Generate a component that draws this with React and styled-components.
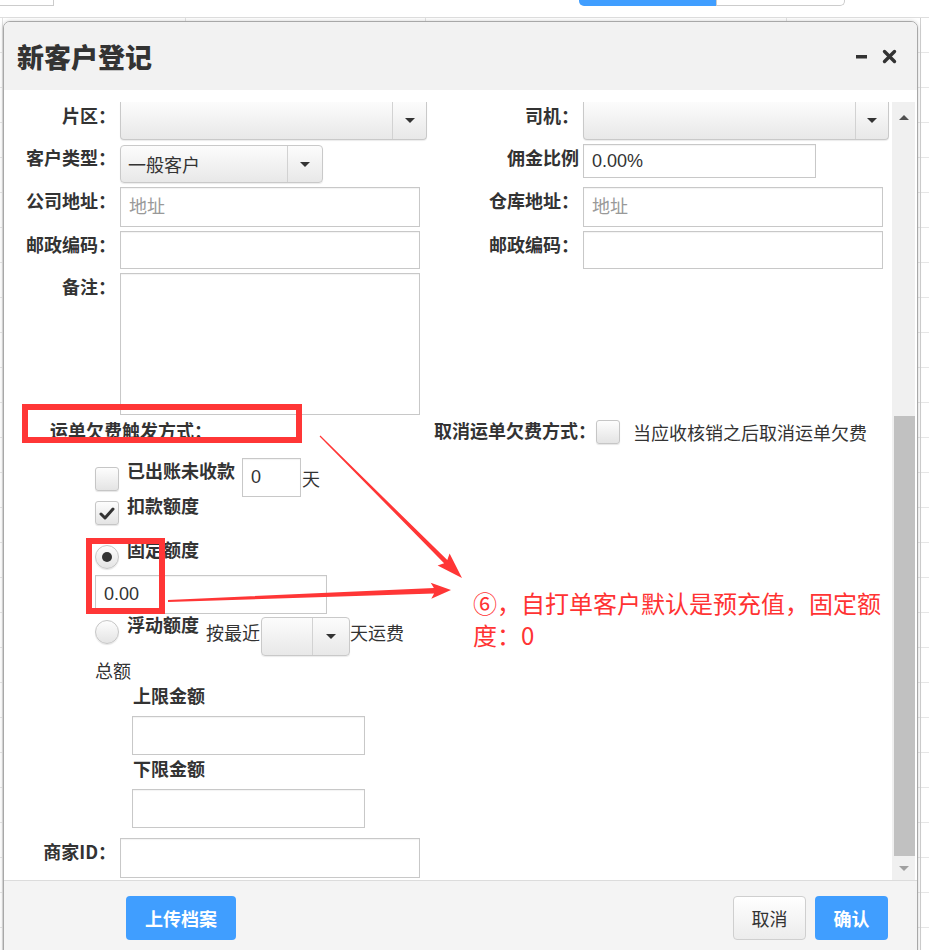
import React from 'react';
import styled, { createGlobalStyle } from 'styled-components';

const GlobalStyle = createGlobalStyle`
  html, body {
    margin: 0;
    padding: 0;
  }
  body {
    font-family: "Liberation Sans", "Noto Sans CJK SC", sans-serif;
    color: #333;
    background: #fff;
  }
  * {
    box-sizing: border-box;
  }
`;

const Page = styled.div`
  position: relative;
  width: 929px;
  height: 950px;
  overflow: hidden;
  background: #fff;
`;

// list page that sits behind the modal
const TopStrip = styled.div`
  height: 18px;
  display: flex;
  align-items: flex-start;
  border-bottom: 1px solid #dedede;
`;

const SearchStub = styled.div`
  width: 54px;
  height: 6px;
  border: 1px solid #ccc;
  border-top: none;
  border-left: none;
`;

const Tabs = styled.div`
  display: flex;
  margin-left: 525px;
`;

const Tab = styled.div`
  width: ${p => p.$w}px;
  height: 6px;
  background: ${p => (p.$active ? '#409eff' : '#fff')};
  border: ${p => (p.$active ? 'none' : '1px solid #ccc')};
  border-top: none;
  border-radius: ${p => (p.$active ? '0 0 0 5px' : '0 0 5px 0')};
`;

const TableBg = styled.div`
  height: 932px;
  background:
    linear-gradient(#e2e2e2, #e2e2e2) 2px 0 / 1px 100% no-repeat,
    linear-gradient(#e2e2e2, #e2e2e2) 185px 0 / 1px 100% no-repeat,
    linear-gradient(#e2e2e2, #e2e2e2) 425px 0 / 1px 100% no-repeat,
    linear-gradient(#e2e2e2, #e2e2e2) 786px 0 / 1px 100% no-repeat,
    linear-gradient(#d0d0d0, #d0d0d0) 920px 0 / 1px 100% no-repeat,
    repeating-linear-gradient(to bottom, transparent 0 34px, #e6e6e6 34px 35px);
`;

const Dialog = styled.div`
  position: absolute;
  left: 3px;
  top: 21px;
  width: 915px;
  height: 950px;
  display: flex;
  flex-direction: column;
  background: #fff;
  border: 1px solid #a8a8a8;
  border-radius: 7px 7px 0 0;
  box-shadow: 0 0 4px rgba(0, 0, 0, 0.18);
  overflow: hidden;
`;

const Header = styled.div`
  flex: none;
  height: 68px;
  display: flex;
  align-items: center;
  justify-content: space-between;
  padding: 0 20px 0 13px;
  background: #f2f2f2;
`;

const Title = styled.h2`
  margin: 0;
  font-family: "Noto Sans CJK SC", sans-serif;
  font-size: 27px;
  font-weight: 900;
  color: #333;
`;

const HeaderTools = styled.div`
  display: flex;
  align-items: center;
  gap: 14px;
  color: #333;
`;

const Body = styled.div`
  flex: none;
  height: 790px;
  padding-top: 12px;
  display: flex;
  flex-direction: column;
  background: #fff;
`;

const ScrollArea = styled.div`
  flex: 1;
  min-height: 0;
  display: flex;
  padding-right: 2px;
`;

const Content = styled.div`
  flex: 1;
  overflow: hidden;
`;

const Scrollbar = styled.div`
  width: 23px;
  display: flex;
  flex-direction: column;
  background: #f0f0f0;
`;

const ScrollBtn = styled.div`
  flex: none;
  height: ${p => p.$h}px;
  display: flex;
  align-items: center;
  justify-content: center;
`;

const ScrollTrack = styled.div`
  flex: 1;
  display: flex;
  flex-direction: column;
  justify-content: flex-end;
  padding-left: 2px;
`;

const Thumb = styled.div`
  height: 440px;
  background: #c1c1c1;
`;

const Tri = styled.span`
  width: 0;
  height: 0;
  border-left: 5px solid transparent;
  border-right: 5px solid transparent;
  ${p =>
    p.$up
      ? `border-bottom: 5px solid ${p.$color};`
      : `border-top: 5px solid ${p.$color};`}
`;

const Grid = styled.div`
  display: grid;
  grid-template-columns: 426px 1fr;
  row-gap: 4px;
  align-items: start;
`;

const Field = styled.div`
  display: flex;
  align-items: flex-start;
  margin-top: ${p => p.$top || 0}px;
`;

const Label = styled.label`
  flex: none;
  width: ${p => p.$w}px;
  margin-right: 4px;
  padding-top: 3px;
  text-align: right;
  font-family: "Noto Sans CJK SC", sans-serif;
  font-size: 18px;
  line-height: 20px;
  font-weight: 700;
  color: #333;
  white-space: nowrap;
`;

// the first row is scrolled half out of view, so its top edge is not drawn
const Select = styled.div`
  display: flex;
  width: ${p => p.$w}px;
  height: ${p => p.$h}px;
  margin-top: ${p => p.$top || 0}px;
  border: 1px solid #c9c9c9;
  border-radius: ${p => (p.$cut ? '0 0 4px 4px' : '4px')};
  ${p => p.$cut && 'border-top: none;'}
  background: linear-gradient(#fcfcfc, #e8e8e8);
  box-shadow: 0 1px 1px rgba(0, 0, 0, 0.08);
`;

const SelectValue = styled.div`
  flex: 1;
  display: flex;
  align-items: center;
  padding-left: 7px;
  font-family: "Noto Sans CJK SC", sans-serif;
  font-size: 18px;
  color: #333;
`;

const SelectArrow = styled.div`
  flex: none;
  width: ${p => p.$w}px;
  display: flex;
  align-items: center;
  justify-content: center;
  border-left: 1px solid #d2d2d2;
`;

const Input = styled.input`
  display: block;
  width: ${p => p.$w}px;
  height: ${p => p.$h}px;
  margin-top: ${p => p.$top || 0}px;
  margin-left: ${p => p.$left || 0}px;
  padding: 0 8px;
  border: 1px solid #c8c8c8;
  border-radius: 0;
  background: #fff;
  box-shadow: inset 0 1px 1px rgba(0, 0, 0, 0.05);
  font-family: "Liberation Sans", "Noto Sans CJK SC", sans-serif;
  font-size: 18px;
  color: #333;
  outline: none;

  &::placeholder {
    color: #999;
  }
`;

const TextArea = styled.textarea`
  display: block;
  width: 300px;
  height: 142px;
  border: 1px solid #c8c8c8;
  border-radius: 0;
  resize: none;
  box-shadow: inset 0 1px 1px rgba(0, 0, 0, 0.05);
  outline: none;
`;

const TriggerRow = styled.div`
  display: grid;
  grid-template-columns: 426px 1fr;
  align-items: start;
  margin-top: 4px;
`;

const SectionTitle = styled.span`
  padding-left: 46px;
  font-family: "Noto Sans CJK SC", sans-serif;
  font-size: 18px;
  line-height: 22px;
  font-weight: 700;
  color: #333;
`;

const CancelGroup = styled.div`
  display: flex;
  align-items: center;
  padding-left: 4px;
  font-family: "Noto Sans CJK SC", sans-serif;
  font-size: 18px;
  color: #333;
`;

const CancelLabel = styled.b`
  font-weight: 700;
  line-height: 22px;
  align-self: flex-start;
`;

const CancelText = styled.span`
  margin-left: 13px;
`;

const Options = styled.div`
  padding-left: 91px;
  font-family: "Noto Sans CJK SC", sans-serif;
  font-size: 18px;
  color: #333;
`;

const OptionRow = styled.div`
  display: flex;
  align-items: flex-start;
  margin-top: ${p => p.$top}px;
`;

const OptionLabel = styled.span`
  margin-left: 8px;
  line-height: 20px;
  font-weight: 700;
  white-space: nowrap;
`;

const Plain = styled.span`
  display: block;
  margin: ${p => p.$m};
  line-height: 20px;
  white-space: nowrap;
`;

const SubLabel = styled.div`
  margin: ${p => p.$top}px 0 0 38px;
  line-height: 20px;
  font-weight: 700;
`;

const Check = styled.span`
  flex: none;
  display: flex;
  align-items: center;
  justify-content: center;
  width: 24px;
  height: 24px;
  margin-top: ${p => p.$top || 0}px;
  border: 1px solid #c6c6c6;
  border-radius: ${p => (p.$round ? '50%' : '3px')};
  background: linear-gradient(#fdfdfd, #e4e4e4);
  box-shadow: 0 1px 1px rgba(0, 0, 0, 0.1);
`;

const Dot = styled.span`
  width: 10px;
  height: 10px;
  border-radius: 50%;
  background: #333;
`;

const Footer = styled.div`
  flex: 1;
  display: flex;
  align-items: flex-start;
  justify-content: space-between;
  padding: 15px 29px 0 122px;
  background: #f4f4f4;
  border-top: 1px solid #dcdcdc;
`;

const ButtonGroup = styled.div`
  display: flex;
  gap: 9px;
`;

const Button = styled.button`
  height: 44px;
  width: ${p => p.$w}px;
  padding: 0;
  border-radius: 4px;
  font-family: "Noto Sans CJK SC", sans-serif;
  font-size: 18px;
  cursor: pointer;
  ${p =>
    p.$primary
      ? `
    border: none;
    background: #409eff;
    color: #fff;
    font-weight: 700;
  `
      : `
    border: 1px solid #cfcfcf;
    background: linear-gradient(#fff, #ececec);
    color: #333;
    font-weight: 400;
  `}
`;

// red markup drawn on top of the form
const Markup = styled.svg`
  position: absolute;
  left: 0;
  top: 0;
  pointer-events: none;
`;

const Note = styled.div`
  position: absolute;
  left: 473px;
  top: 587px;
  width: 412px;
  font-family: "Noto Sans CJK SC", sans-serif;
  font-size: 24px;
  line-height: 32px;
  color: #ff3333;
`;

const RED = '#ff3636';

const arrowPoints = (sx, sy, ex, ey, w0, w1, headLen, headW) => {
  const dx = ex - sx;
  const dy = ey - sy;
  const len = Math.hypot(dx, dy);
  const ux = dx / len;
  const uy = dy / len;
  const nx = -uy;
  const ny = ux;
  const bx = ex - ux * headLen;
  const by = ey - uy * headLen;
  const wx = bx + ux * 3;
  const wy = by + uy * 3;
  return [
    [sx + (nx * w0) / 2, sy + (ny * w0) / 2],
    [wx + (nx * w1) / 2, wy + (ny * w1) / 2],
    [bx + (nx * headW) / 2, by + (ny * headW) / 2],
    [ex, ey],
    [bx - (nx * headW) / 2, by - (ny * headW) / 2],
    [wx - (nx * w1) / 2, wy - (ny * w1) / 2],
    [sx - (nx * w0) / 2, sy - (ny * w0) / 2],
  ]
    .map(p => p.map(v => v.toFixed(1)).join(','))
    .join(' ');
};

const Dropdown = ({ w, h, arrow, value, top, cut }) => (
  <Select $w={w} $h={h} $top={top} $cut={cut}>
    <SelectValue>{value}</SelectValue>
    <SelectArrow $w={arrow}>
      <Tri $color="#333" />
    </SelectArrow>
  </Select>
);

const CheckMark = () => (
  <svg width="22" height="22" viewBox="0 0 22 22">
    <path d="M5 12 L9 16 L17 7" fill="none" stroke="#333" strokeWidth="3" strokeLinecap="round" strokeLinejoin="round" />
  </svg>
);

const App = () => {
  return (
    <Page>
      <GlobalStyle />
      <TopStrip>
        <SearchStub />
        <Tabs>
          <Tab $w={137} $active />
          <Tab $w={129} />
        </Tabs>
      </TopStrip>
      <TableBg />

      <Dialog>
        <Header>
          <Title>新客户登记</Title>
          <HeaderTools>
            <svg width="12" height="14" viewBox="0 0 12 14">
              <rect x="0" y="6" width="11" height="3.5" fill="#333" />
            </svg>
            <svg width="15" height="15" viewBox="0 0 15 15">
              <path d="M2.5 2.5 L12.5 12.5 M12.5 2.5 L2.5 12.5" stroke="#333" strokeWidth="3.4" strokeLinecap="round" />
            </svg>
          </HeaderTools>
        </Header>

        <Body>
          <ScrollArea>
            <Content>
              <Grid>
                <Field>
                  <Label $w={112}>片区：</Label>
                  <Dropdown w={307} h={38} arrow={34} cut />
                </Field>
                <Field>
                  <Label $w={149}>司机：</Label>
                  <Dropdown w={306} h={38} arrow={33} cut />
                </Field>

                <Field>
                  <Label $w={112}>客户类型：</Label>
                  <Dropdown w={203} h={38} arrow={35} value="一般客户" top={1} />
                </Field>
                <Field>
                  <Label $w={149}>佣金比例</Label>
                  <Input $w={233} $h={34} defaultValue="0.00%" />
                </Field>

                <Field>
                  <Label $w={112}>公司地址：</Label>
                  <Input $w={300} $h={40} placeholder="地址" />
                </Field>
                <Field>
                  <Label $w={149}>仓库地址：</Label>
                  <Input $w={300} $h={40} placeholder="地址" />
                </Field>

                <Field>
                  <Label $w={112}>邮政编码：</Label>
                  <Input $w={300} $h={38} />
                </Field>
                <Field>
                  <Label $w={149}>邮政编码：</Label>
                  <Input $w={300} $h={38} />
                </Field>

                <Field>
                  <Label $w={112}>备注：</Label>
                  <TextArea />
                </Field>
              </Grid>

              <TriggerRow>
                <SectionTitle>运单欠费触发方式：</SectionTitle>
                <CancelGroup>
                  <CancelLabel>取消运单欠费方式：</CancelLabel>
                  <Check />
                  <CancelText>当应收核销之后取消运单欠费</CancelText>
                </CancelGroup>
              </TriggerRow>

              <Options>
                <OptionRow $top={15}>
                  <Check $top={7} />
                  <OptionLabel>已出账未收款</OptionLabel>
                  <Input $w={59} $h={39} $top={-2} $left={7} defaultValue="0" />
                  <Plain $m="8px 0 0 1px">天</Plain>
                </OptionRow>
                <OptionRow $top={-2}>
                  <Check $top={6}>
                    <CheckMark />
                  </Check>
                  <OptionLabel>扣款额度</OptionLabel>
                </OptionRow>
                <OptionRow $top={14}>
                  <Check $round $top={6}>
                    <Dot />
                  </Check>
                  <OptionLabel>固定额度</OptionLabel>
                </OptionRow>
                <Input $w={232} $h={39} $top={6} defaultValue="0.00" />
                <OptionRow $top={0}>
                  <Check $round $top={6} />
                  <OptionLabel>浮动额度</OptionLabel>
                  <Plain $m="8px 1px 0 7px">按最近</Plain>
                  <Dropdown w={89} h={39} arrow={37} top={3} />
                  <Plain $m="8px 0 0 0">天运费</Plain>
                </OptionRow>
                <Plain $m="4px 0 0 0">总额</Plain>
                <SubLabel $top={5}>上限金额</SubLabel>
                <Input $w={233} $h={39} $top={11} $left={37} />
                <SubLabel $top={3}>下限金额</SubLabel>
                <Input $w={233} $h={39} $top={11} $left={37} />
              </Options>

              <Field $top={10}>
                <Label $w={112}>商家ID：</Label>
                <Input $w={300} $h={40} />
              </Field>
            </Content>

            <Scrollbar>
              <ScrollBtn $h={30}>
                <Tri $up $color="#505050" />
              </ScrollBtn>
              <ScrollTrack>
                <Thumb />
              </ScrollTrack>
              <ScrollBtn $h={24}>
                <Tri $color="#a0a0a0" />
              </ScrollBtn>
            </Scrollbar>
          </ScrollArea>
        </Body>

        <Footer>
          <Button $primary $w={110}>上传档案</Button>
          <ButtonGroup>
            <Button $w={73}>取消</Button>
            <Button $primary $w={73}>确认</Button>
          </ButtonGroup>
        </Footer>
      </Dialog>

      <Markup width="929" height="950" viewBox="0 0 929 950">
        <rect x="25" y="407" width="274" height="33" fill="none" stroke={RED} strokeWidth="6" />
        <rect x="89" y="541" width="73" height="70" fill="none" stroke={RED} strokeWidth="6" />
        <polygon points={arrowPoints(320, 436, 462, 578, 1.2, 4.5, 26, 17)} fill={RED} />
        <polygon points={arrowPoints(168, 601, 451, 590, 2, 5.5, 20, 16)} fill={RED} />
      </Markup>
      <Note>⑥，自打单客户默认是预充值，固定额度：0</Note>
    </Page>
  );
};

export default App;
